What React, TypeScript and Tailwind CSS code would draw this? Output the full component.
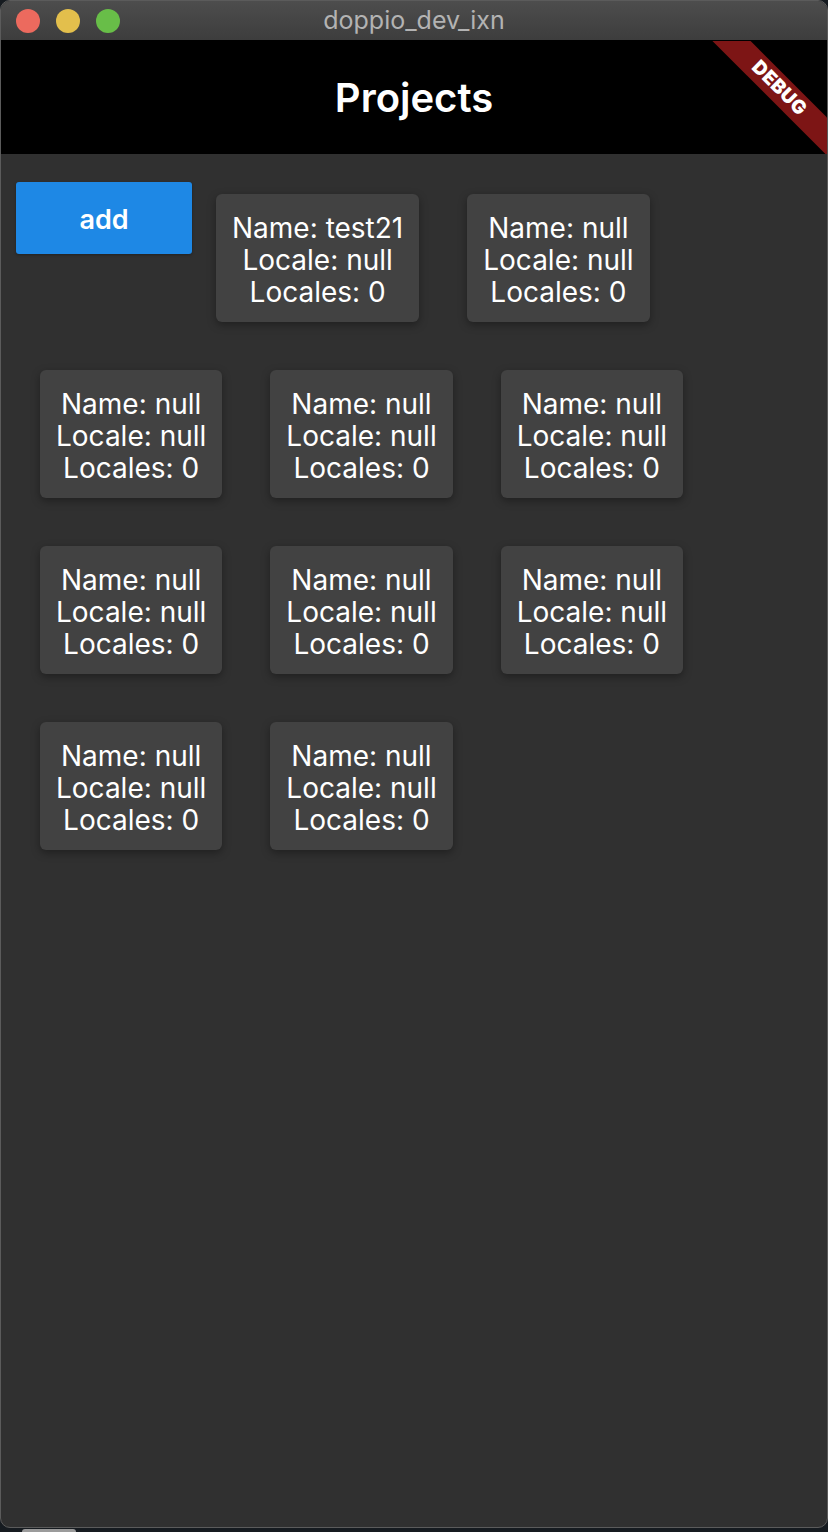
import React from 'react'

type Project = { name: string | null; locale: string | null; locales: number }

const projects: Project[] = [
  { name: 'test21', locale: null, locales: 0 },
  ...Array.from({ length: 9 }, () => ({ name: null, locale: null, locales: 0 })),
]

function ProjectCard({ project }: { project: Project }) {
  return (
    <div className="m-6 rounded-[6px] bg-[#424242] px-4 pb-[14px] pt-[18px] text-center text-[28px] leading-[32px] text-white shadow-[0_3px_8px_rgba(0,0,0,0.35)]">
      <div>Name: {project.name ?? 'null'}</div>
      <div>Locale: {project.locale ?? 'null'}</div>
      <div>Locales: {project.locales}</div>
    </div>
  )
}

export default function App() {
  return (
    <div
      className="relative h-[1532px] w-[828px] overflow-hidden bg-[#161b20]"
      style={{ fontFamily: 'Inter, "Noto Sans", sans-serif' }}
    >
      <div className="flex h-[1528px] w-[828px] flex-col overflow-hidden rounded-[10px] border border-[#5b5b5b] bg-[#303030]">
        {/* Title bar */}
        <div className="relative flex h-10 shrink-0 items-center justify-center border-b border-black bg-gradient-to-b from-[#4d4d4d] to-[#3d3d3d]">
          <div className="absolute left-[15px] top-[8px] flex gap-[16px]">
            <span className="h-6 w-6 rounded-full bg-[#ec6a5e]" />
            <span className="h-6 w-6 rounded-full bg-[#e3bf4c]" />
            <span className="h-6 w-6 rounded-full bg-[#68be48]" />
          </div>
          <span className="text-[25px] text-[#b3b3b3]">doppio_dev_ixn</span>
        </div>

        {/* App bar */}
        <div className="relative flex h-[113px] shrink-0 items-center justify-center overflow-hidden bg-black">
          <h1 className="text-[40px] font-semibold text-white">Projects</h1>
          <div className="absolute left-[696px] top-[34px] flex h-[27px] w-[164px] rotate-45 items-center justify-center bg-[#7d1515] text-[19px] font-black tracking-[0.5px] text-white">
            DEBUG
          </div>
        </div>

        {/* Content */}
        <div className="flex flex-wrap items-start pl-[15px] pr-4 pt-4">
          <button className="mt-3 h-[72px] w-[176px] rounded-[3px] bg-[#1e88e5] pt-1 text-[27px] font-semibold text-white shadow-[0_1px_3px_rgba(0,0,0,0.3)]">
            add
          </button>
          {projects.map((p, i) => (
            <ProjectCard key={i} project={p} />
          ))}
        </div>
      </div>
      <div className="absolute left-[22px] top-[1529px] h-2 w-[54px] rounded-t-[3px] bg-[#9b9b9b]" />
    </div>
  )
}
